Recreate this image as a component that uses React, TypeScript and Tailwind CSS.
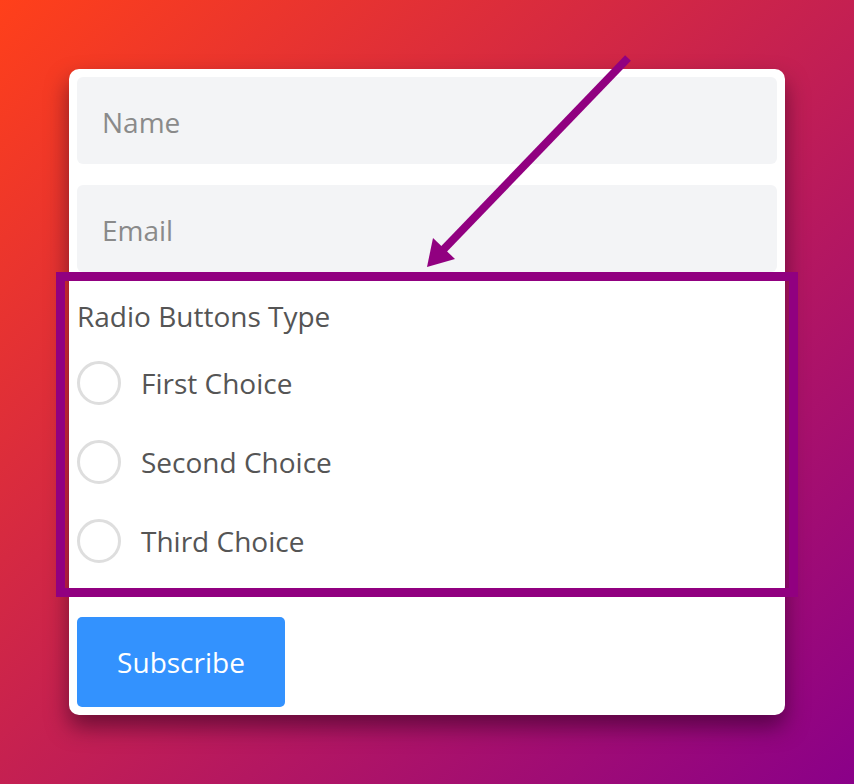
export default function App() {
  const choices = ["First Choice", "Second Choice", "Third Choice"];

  return (
    <div
      className="relative w-full h-[784px] overflow-hidden bg-[linear-gradient(to_bottom_right,#ff401a,#8a0089)] pt-[69px] pl-[69px]"
      style={{ fontFamily: '"Open Sans", "Noto Sans", sans-serif' }}
    >
      {/* Form card */}
      <div className="w-[716px] rounded-[10px] bg-white p-2 shadow-[0_12px_22px_rgba(40,0,30,0.55)]">
        <input
          type="text"
          placeholder="Name"
          className="block w-full h-[87px] rounded-md bg-[#f3f4f6] px-[25px] pt-[2px] text-[28px] text-[#555] placeholder:text-[#8a8a8a] outline-none"
        />
        <input
          type="email"
          placeholder="Email"
          className="mt-[21px] block w-full h-[87px] rounded-md bg-[#f3f4f6] px-[25px] pt-[2px] text-[28px] text-[#555] placeholder:text-[#8a8a8a] outline-none"
        />

        <div className="mt-[25px] text-[28px] leading-[38px] text-[#555]">
          Radio Buttons Type
        </div>
        <div className="mt-[26px] flex flex-col gap-[35px]">
          {choices.map((c) => (
            <label key={c} className="flex items-center h-[44px] cursor-pointer">
              <span className="w-[44px] h-[44px] rounded-full border-[3px] border-[#dedede] bg-white" />
              <span className="ml-[20px] text-[28px] leading-[38px] text-[#555]">{c}</span>
            </label>
          ))}
        </div>

        <button className="mt-[54px] w-[208px] h-[90px] rounded-[5px] bg-[#3392fe] text-[28px] text-white">
          Subscribe
        </button>
      </div>

      {/* Annotation: highlight box */}
      <div className="absolute left-[56px] top-[272px] w-[742px] h-[325px] border-[9px] border-[#910080]" />

      {/* Annotation: arrow */}
      <svg className="absolute left-0 top-0" width="854" height="784" viewBox="0 0 854 784">
        <line x1="628" y1="58" x2="443" y2="250" stroke="#910080" strokeWidth="8" />
        <polygon points="427,267 433,238 455,259" fill="#910080" />
      </svg>
    </div>
  );
}
